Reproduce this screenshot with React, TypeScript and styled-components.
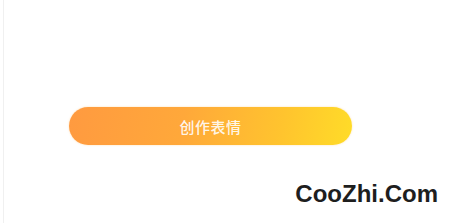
import React from "react";
import styled, { createGlobalStyle } from "styled-components";

const GlobalStyle = createGlobalStyle`
  html, body {
    margin: 0;
    padding: 0;
    background: #ffffff;
  }
  body {
    font-family: "Noto Sans CJK SC", "Liberation Sans", sans-serif;
  }
`;

const Page = styled.div`
  width: 474px;
  height: 223px;
  box-sizing: border-box;
  display: flex;
  flex-direction: column;
  overflow: hidden;
`;

const Screen = styled.div`
  flex: 1;
  margin-left: 3px;
  border-left: 1px solid #f0f0f0;
  padding: 107px 0 0 65px;
  display: flex;
  flex-direction: column;
`;

const CreateButton = styled.button`
  width: 283px;
  height: 38px;
  border: none;
  border-radius: 19px;
  padding: 0;
  background: linear-gradient(100deg, #ff9a40 0%, #ffa83a 40%, #ffc42e 75%, #ffdc28 100%);
  box-shadow: 0 0 2px rgba(255, 190, 90, 0.5);
  color: rgba(255, 255, 255, 0.9);
  font-family: "Noto Sans CJK SC", sans-serif;
  font-size: 15px;
  font-weight: 500;
  letter-spacing: 0.5px;
  display: flex;
  align-items: center;
  justify-content: center;
`;

const Watermark = styled.div`
  display: flex;
  justify-content: flex-end;
  padding: 0 36px 0 0;
  margin-top: 35px;
  font-family: "Liberation Sans", Arial, sans-serif;
  font-weight: 700;
  font-size: 24px;
  color: #1e1e1e;
`;

export default function App() {
  return (
    <>
      <GlobalStyle />
      <Page>
        <Screen>
          <CreateButton>创作表情</CreateButton>
          <Watermark>CooZhi.Com</Watermark>
        </Screen>
      </Page>
    </>
  );
}
